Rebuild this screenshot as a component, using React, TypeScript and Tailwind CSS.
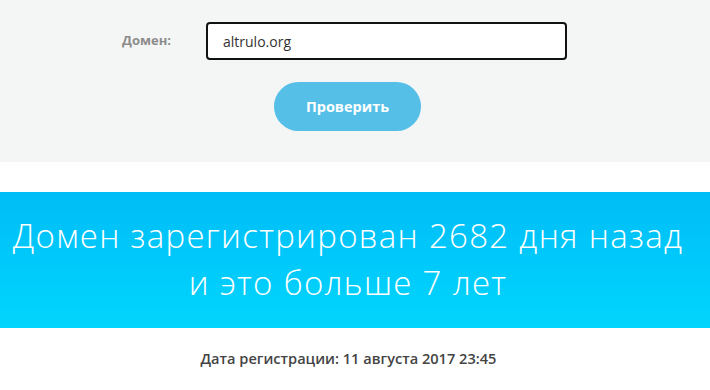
import React from "react";

export default function App() {
  return (
    <div className="w-[710px] h-[390px] bg-white overflow-hidden" style={{ fontFamily: '"Open Sans", "Noto Sans", sans-serif' }}>
      <div className="bg-[#f4f5f5] h-[162px] pt-[22px]">
        <div className="flex items-center">
          <div className="w-[206px] pl-[122px] text-[13px] font-bold text-[#8c8c8c]">Домен:</div>
          <div className="w-[361px] h-[38px] border-2 border-[#111] rounded-[4px] bg-white flex items-center pl-[15px] text-[14px] text-[#333]">
            altrulo.org
          </div>
        </div>
        <div className="flex mt-[22px] pl-[274px]">
          <button className="w-[147px] h-[49px] rounded-full bg-[#55bfe8] text-white text-[14.5px] font-bold">Проверить</button>
        </div>
      </div>
      <div className="h-[30px] bg-white" />
      <div className="h-[136px] bg-gradient-to-b from-[#00bdf7] to-[#00d5fd] flex flex-col items-center justify-center text-white font-light text-[33px] tracking-[1.3px] leading-[47px] pb-[2px] pr-[14px]">
        <div>Домен зарегистрирован 2682 дня назад</div>
        <div>и это больше 7 лет</div>
      </div>
      <div className="text-center text-[14.6px] font-semibold text-[#444] mt-[20px] pr-[13px]">Дата регистрации: 11 августа 2017 23:45</div>
    </div>
  );
}
